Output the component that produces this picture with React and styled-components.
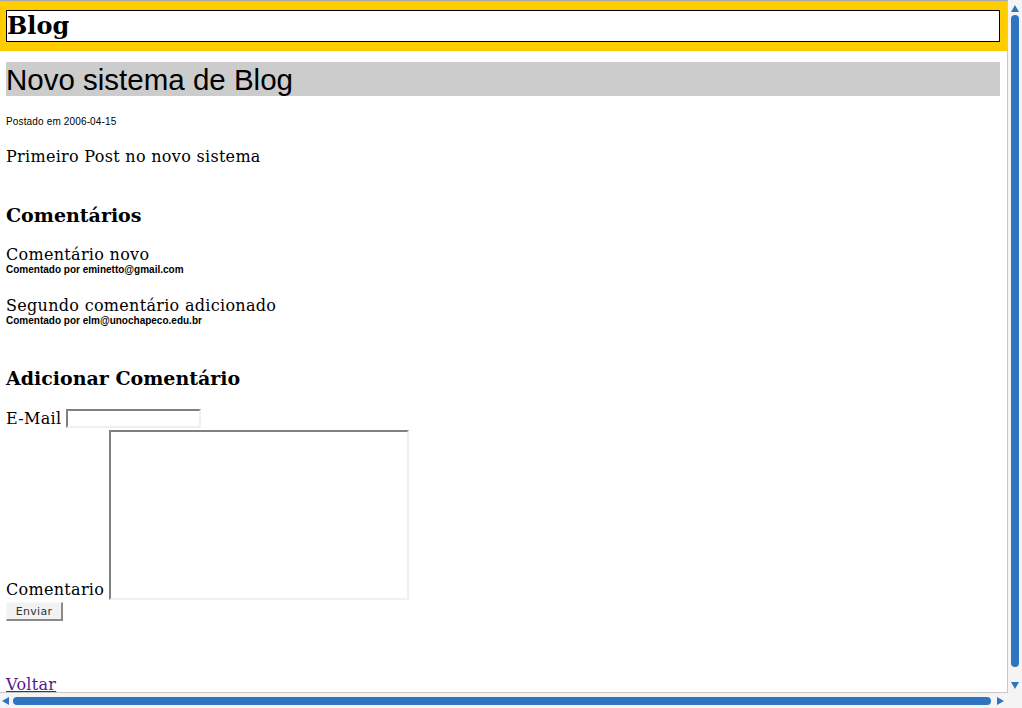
import React from "react";
import styled, { createGlobalStyle } from "styled-components";

const Global = createGlobalStyle`
  html, body { margin: 0; padding: 0; background: #fff; }
  body { font-family: "DejaVu Serif", serif; color: #000; }
`;

const Frame = styled.div`
  width: 1022px;
  height: 708px;
  display: grid;
  grid-template-columns: 1fr 14px;
  grid-template-rows: 1fr 15px;
  overflow: hidden;
  background: #fff;
`;

const Viewport = styled.div`
  border-top: 1px solid #a8a8a8;
  border-right: 1px solid #c8c8c8;
  border-bottom: 1px solid #c8c8c8;
  overflow: hidden;
  min-height: 0;
`;

const Header = styled.header`
  background: #ffcc00;
  padding: 9px 7px 9px 6px;
`;

const TitleBox = styled.div`
  background: #fff;
  border: 1px solid #000;
  height: 30px;
  display: flex;
  align-items: center;
  padding-left: 0;
`;

const SiteTitle = styled.h1`
  margin: 0;
  font-family: "DejaVu Serif", serif;
  font-weight: bold;
  font-size: 24px;
  line-height: 30px;
`;

const Main = styled.main`
  padding: 0 7px 0 6px;
  display: flex;
  flex-direction: column;
  align-items: flex-start;
`;

const PostTitle = styled.h2`
  align-self: stretch;
  margin: 11px 0 0;
  background: #cccccc;
  height: 34px;
  font-family: "Liberation Sans", Arial, sans-serif;
  font-weight: normal;
  font-size: 29.5px;
  line-height: 36px;
  padding-left: 0;
`;

const Meta = styled.div`
  margin-top: ${(p) => p.$top || 0}px;
  font-family: "Liberation Sans", Arial, sans-serif;
  font-size: 10px;
  line-height: 12px;
  font-weight: ${(p) => (p.$bold ? "bold" : "normal")};
  letter-spacing: ${(p) => (p.$bold ? "0" : "0.15px")};
`;

const Text = styled.p`
  margin: ${(p) => p.$top || 0}px 0 0;
  font-family: "DejaVu Serif", serif;
  font-size: 16px;
  line-height: 19px;
  letter-spacing: 0.3px;
`;

const SectionTitle = styled.h3`
  margin: ${(p) => p.$top || 0}px 0 0;
  font-family: "DejaVu Serif", serif;
  font-weight: bold;
  font-size: 19px;
  line-height: 20px;
`;

const Form = styled.form`
  margin-top: 21px;
  display: flex;
  flex-direction: column;
  align-items: flex-start;
`;

const FieldRow = styled.label`
  display: flex;
  align-items: flex-end;
  gap: 5px;
  font-family: "DejaVu Serif", serif;
  font-size: 16px;
  line-height: 19px;
  letter-spacing: 0.3px;
  margin-top: ${(p) => p.$top || 0}px;
`;

const LabelText = styled.span`
  padding-bottom: ${(p) => p.$pb || 0}px;
`;

const inset = `
  border-style: solid;
  border-width: 2px;
  border-color: #808080 #f0f0f0 #f0f0f0 #808080;
  background: #fff;
  box-sizing: border-box;
  outline: none;
  margin: 0;
  padding: 1px;
`;

const TextInput = styled.input`
  ${inset}
  width: 135px;
  height: 19px;
`;

const TextArea = styled.textarea`
  ${inset}
  width: 300px;
  height: 170px;
  resize: none;
`;

const SubmitButton = styled.button`
  margin-top: 2px;
  width: 57px;
  height: 19px;
  box-sizing: border-box;
  background: #f2f2f2;
  border-style: solid;
  border-width: 1px 2px 2px 1px;
  border-color: #f8f8f8 #8a8a8a #8a8a8a #f8f8f8;
  font-family: "DejaVu Sans", sans-serif;
  font-size: 11px;
  color: #333;
  padding: 0;
  letter-spacing: 0.3px;
`;

const BackLink = styled.a`
  margin-top: 54px;
  font-family: "DejaVu Serif", serif;
  font-size: 16px;
  line-height: 19px;
  letter-spacing: 0.3px;
  color: #551a8b;
  text-decoration: underline;
`;

const VTrack = styled.div`
  background: #f4f4f4;
  display: flex;
  flex-direction: column;
  align-items: center;
  padding: 5px 0 4px;
  gap: 3px;
`;

const HTrack = styled.div`
  background: #f4f4f4;
  display: flex;
  align-items: center;
  padding: 0 4px 0 2px;
  gap: 4px;
`;

const Corner = styled.div`
  background: #f4f4f4;
`;

const Thumb = styled.div`
  background: #2f74bf;
  border-radius: 5px;
  ${(p) =>
    p.$vertical
      ? "width: 8px; flex: 1; margin-bottom: 12px;"
      : "height: 8px; flex: 1; margin-right: 2px;"}
`;

const Arrow = ({ dir }) => {
  const pts = {
    up: "4,0 8,7 0,7",
    down: "0,0 8,0 4,7",
    left: "7,0 7,8 0,4",
    right: "0,0 7,4 0,8",
  }[dir];
  const vertical = dir === "up" || dir === "down";
  return (
    <svg
      width={vertical ? 8 : 7}
      height={vertical ? 7 : 8}
      viewBox={vertical ? "0 0 8 7" : "0 0 7 8"}
      style={{ flex: "none" }}
    >
      <polygon points={pts} fill="#2f74bf" />
    </svg>
  );
};

export default function App() {
  return (
    <>
      <Global />
      <Frame>
        <Viewport>
          <Header>
            <TitleBox>
              <SiteTitle>Blog</SiteTitle>
            </TitleBox>
          </Header>
          <Main>
            <PostTitle>Novo sistema de Blog</PostTitle>
            <Meta $top={20}>Postado em 2006-04-15</Meta>
            <Text $top={19}>Primeiro Post no novo sistema</Text>
            <SectionTitle $top={39}>Comentários</SectionTitle>
            <Text $top={20}>Comentário novo</Text>
            <Meta $bold>Comentado por eminetto@gmail.com</Meta>
            <Text $top={20}>Segundo comentário adicionado</Text>
            <Meta $bold>Comentado por elm@unochapeco.edu.br</Meta>
            <SectionTitle $top={41}>Adicionar Comentário</SectionTitle>
            <Form onSubmit={(e) => e.preventDefault()}>
              <FieldRow>
                <LabelText>E-Mail</LabelText>
                <TextInput type="text" />
              </FieldRow>
              <FieldRow $top={2}>
                <LabelText $pb={1}>Comentario</LabelText>
                <TextArea />
              </FieldRow>
              <SubmitButton type="submit">Enviar</SubmitButton>
            </Form>
            <BackLink href="#">Voltar</BackLink>
          </Main>
        </Viewport>
        <VTrack>
          <Arrow dir="up" />
          <Thumb $vertical />
          <Arrow dir="down" />
        </VTrack>
        <HTrack>
          <Arrow dir="left" />
          <Thumb />
          <Arrow dir="right" />
        </HTrack>
        <Corner />
      </Frame>
    </>
  );
}
